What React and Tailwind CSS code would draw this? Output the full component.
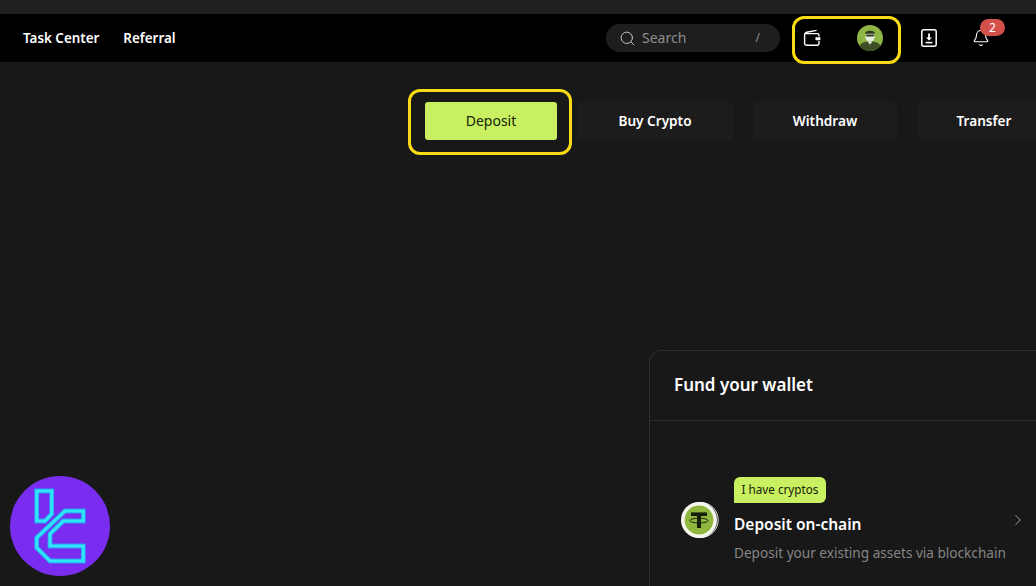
import { Search, ChevronRight, Bell } from 'lucide-react'

const font = { fontFamily: '"Noto Sans", "Open Sans", sans-serif' }

const WalletIcon = () => (
  <svg width="18" height="18" viewBox="0 0 18 18" fill="none" stroke="white" strokeWidth="1.4" className="shrink-0">
    <path d="M13.6 1.4 L3.6 3.2 C2.4 3.6 1.6 4.2 1.6 5.4 V14.6 C1.6 15.6 2.2 16.2 3.2 16.2 H14.4 C15.4 16.2 16 15.6 16 14.6 V12" />
    <path d="M2 4.6 H14.4 C15.4 4.6 16 5.2 16 6.2 V7.6" />
    <rect x="12.4" y="8.2" width="5" height="3" rx="0.6" fill="white" stroke="none" />
  </svg>
)

const Avatar = () => (
  <svg width="26" height="26" viewBox="0 0 26 26" className="shrink-0">
    <circle cx="13" cy="13" r="13" fill="#8fb545" />
    <path d="M2.6 21 C4 17.4 8 16.4 13 16.4 C18 16.4 22 17.4 23.4 21 C21 24.2 17.2 26 13 26 C8.8 26 5 24.2 2.6 21 Z" fill="#3d4f24" />
    <circle cx="13" cy="12" r="4.6" fill="#e6ece0" />
    <path d="M8.4 7.6 C9.4 5 16.6 5 17.6 7.6 L17.6 8.8 L8.4 8.8 Z" fill="#2f3a1e" />
    <rect x="9" y="9.4" width="8" height="2.2" rx="1" fill="#2f3a1e" />
    <path d="M10.4 16.4 L13 19.4 L15.6 16.4 Z" fill="#e6ece0" />
  </svg>
)

const DownloadIcon = () => (
  <svg width="18" height="20" viewBox="0 0 18 20" fill="none" stroke="white" strokeWidth="1.5" className="shrink-0">
    <rect x="1.8" y="1.8" width="14.4" height="16.4" rx="2" />
    <path d="M9 5.5 V11.5" strokeWidth="1.8" />
    <path d="M6 9.4 L9 12.4 L12 9.4 Z" fill="white" stroke="none" />
    <path d="M5.6 14.6 H12.4" strokeWidth="1.6" />
  </svg>
)

const TetherIcon = () => (
  <svg width="38" height="38" viewBox="0 0 38 38" className="shrink-0">
    <circle cx="19.6" cy="19" r="17.6" fill="none" stroke="#e8e8e8" strokeWidth="1" />
    <circle cx="18" cy="19" r="18" fill="#f6f6f0" />
    <circle cx="18" cy="19" r="14.4" fill="#8fb73e" />
    <rect x="10" y="11.4" width="16" height="3.6" fill="#16210a" />
    <rect x="16" y="12" width="4" height="15" fill="#16210a" />
    <ellipse cx="18" cy="19.6" rx="9" ry="2.4" fill="none" stroke="#16210a" strokeWidth="1" />
  </svg>
)

const logoPaths = [
  'M26.7 15 H41.7 V38 L35 45 H26.7 Z',
  'M55 35 H73.3 V45 H53.3 L40 58 V70 H73.3 V85 H40 L26.7 71.7 V61.7 Z',
]

const Logo = () => (
  <svg width="100" height="100" viewBox="0 0 100 100" fill="none">
    {logoPaths.map((d) => (
      <g key={d}>
        <path d={d} stroke="#2a9df4" strokeWidth="4.8" />
        <path d={d} stroke="#2fe6f8" strokeWidth="3" />
      </g>
    ))}
  </svg>
)

const actions = [
  { label: 'Buy Crypto', w: 'w-[156px]' },
  { label: 'Withdraw', w: 'w-[144px]' },
  { label: 'Transfer', w: 'w-[134px]' },
]

export default function App() {
  return (
    <div className="relative flex h-[586px] w-[1036px] flex-col overflow-hidden bg-[#181818] text-white" style={font}>
      <div className="h-[14px] shrink-0 bg-[#202020]" />

      {/* Header */}
      <div className="flex h-12 shrink-0 items-center bg-black pl-[23px] pr-[46px]">
        <div className="flex items-center gap-6 text-[13.4px] font-semibold">
          <span>Task Center</span>
          <span>Referral</span>
        </div>
        <div className="ml-auto flex items-center">
          <div className="flex h-7 w-[174px] items-center rounded-full bg-[#1e1e1e] pl-[13px] pr-[20px] text-sm text-[#8e8e8e]">
            <Search size={17} strokeWidth={1.4} className="text-[#c4c4c4]" />
            <span className="ml-[6px]">Search</span>
            <span className="ml-auto text-xs">/</span>
          </div>
          <div className="relative ml-[23px] flex w-[80px] items-center justify-between">
            <div className="pointer-events-none absolute -bottom-[13px] -left-[11px] -right-[18px] -top-[9px] rounded-[12px] border-[3px] border-[#fada14]" />
            <WalletIcon />
            <Avatar />
          </div>
          <div className="ml-[37px]"><DownloadIcon /></div>
          <div className="relative ml-[34px] flex">
            <Bell size={18} strokeWidth={1.5} />
            <span className="absolute -right-[15px] -top-[10px] flex h-[17px] w-[25px] items-center justify-center rounded-full bg-[#d4504a] text-xs leading-none">2</span>
          </div>
        </div>
      </div>

      {/* Actions */}
      <div className="mt-10 flex h-[38px] shrink-0 gap-5 pl-[425px] text-[13.6px] font-semibold">
        <div className="relative flex w-[132px] shrink-0 items-center justify-center rounded-[3px] bg-[#c8f060] text-sm font-normal text-[#16210a]">
          <div className="pointer-events-none absolute -bottom-[15px] -left-[17px] -right-[15px] -top-[13px] rounded-[12px] border-[3px] border-[#fada14]" />
          Deposit
        </div>
        {actions.map((a) => (
          <div key={a.label} className={`flex ${a.w} shrink-0 items-center justify-center rounded-[3px] bg-[#1c1c1c]`}>
            {a.label}
          </div>
        ))}
      </div>

      {/* Fund card */}
      <div className="ml-[649px] mt-[210px] flex-1 rounded-tl-xl border-l border-t border-[#2e2e2e]">
        <div className="flex h-[70px] items-center border-b border-[#2e2e2e] pb-[2px] pl-6 text-[17px] font-semibold">
          Fund your wallet
        </div>
        <div className="flex items-center pl-[31px] pr-[9px] pt-[56px]">
          <TetherIcon />
          <div className="ml-[15px]">
            <div className="flex h-[26px] w-[92px] items-center justify-center rounded-[6px] rounded-bl-none bg-[#c8f060] text-[11.7px] text-[#16210a]">
              I have cryptos
            </div>
            <div className="mt-[10px] text-[15.5px] font-semibold leading-[22px]">Deposit on-chain</div>
            <div className="mt-[8px] whitespace-nowrap text-[13.6px] leading-[20px] text-[#858585]">Deposit your existing assets via blockchain</div>
          </div>
          <ChevronRight size={18} strokeWidth={1.2} className="ml-auto text-[#b0b0b0]" />
        </div>
      </div>

      {/* Watermark badge */}
      <div className="absolute bottom-[10px] left-[10px] flex h-[100px] w-[100px] items-center justify-center rounded-full bg-[#7a2df0]">
        <Logo />
      </div>
    </div>
  )
}
